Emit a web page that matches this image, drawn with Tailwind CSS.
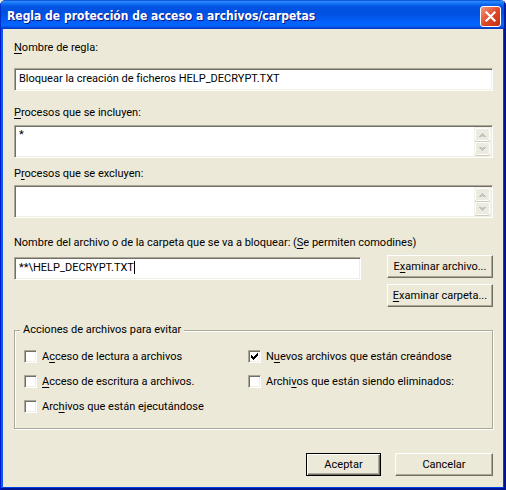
<!DOCTYPE html>
<html lang="es">
<head>
  <meta charset="UTF-8" />
  <meta name="viewport" content="width=device-width, initial-scale=1" />
  <title>Regla de protección de acceso a archivos/carpetas</title>
  <script src="https://cdn.jsdelivr.net/npm/@tailwindcss/browser@4"></script>
</head>
<body class="bg-[#ece9d8] text-black text-[11px] leading-[14px] font-['Roboto','Liberation_Sans',sans-serif] [font-variant-ligatures:none]">

  <div class="min-h-screen flex flex-col rounded-t-md overflow-hidden bg-[#ece9d8] shadow-[inset_1px_0_#0019cf,inset_-2px_-2px_#001590,inset_3px_0_#0c5be8,inset_-3px_-3px_#003ee6]">

    <header class="h-[29px] flex items-center justify-between pl-[7px] pr-[5px] pt-[3px] bg-[linear-gradient(to_bottom,#0048d0_0%,#2f8cff_6%,#1272f5_12%,#0455e2_22%,#0050e0_45%,#0560fb_75%,#0365fe_88%,#0048dc_95%,#0036b8_100%)] shadow-[inset_1px_0_#0030c8,inset_-2px_0_#001ea0]">
      <h1 class="text-[12px] leading-4 font-bold text-white whitespace-nowrap [text-shadow:1px_1px_#0a1883] font-['DejaVu_Sans_Condensed','DejaVu_Sans',sans-serif]">Regla de protección de acceso a archivos/carpetas</h1>
      <button type="button" aria-label="Cerrar" class="size-[21px] shrink-0 grid place-items-center rounded-[3px] border border-white bg-linear-to-br from-[#f0957c] via-[#e0492a] to-[#c03010]">
        <svg class="size-[13px]" viewBox="0 0 13 13" fill="none" stroke="white" stroke-width="2.2" stroke-linecap="square">
          <path d="M2.5 2.5 10.5 10.5M10.5 2.5 2.5 10.5" />
        </svg>
      </button>
    </header>

    <form class="flex flex-col pl-[14px] pr-[13px] pt-3 pb-[13px]">
      <label for="rule-name"><u class="underline-offset-2">N</u>ombre de regla:</label>
      <input id="rule-name" type="text" value="Bloquear la creación de ficheros HELP_DECRYPT.TXT"
        class="mt-[13px] h-[23px] px-1 pb-0.5 bg-white outline-none border border-t-[#aca899] border-l-[#aca899] border-r-white border-b-white shadow-[inset_1px_1px_#716f64,inset_-1px_-1px_#f1efe2]" />

      <label for="include" class="mt-[15px]"><u class="underline-offset-2">P</u>rocesos que se incluyen:</label>
      <div class="mt-[5px] h-[33px] flex p-px bg-white border border-t-[#aca899] border-l-[#aca899] border-r-white border-b-white shadow-[inset_1px_1px_#716f64,inset_-1px_-1px_#f1efe2]">
        <textarea id="include" class="flex-1 min-w-0 px-[3px] pt-px resize-none overflow-hidden outline-none">*</textarea>
        <div class="w-[17px] flex flex-col gap-px p-px bg-[#f3f1ea]">
          <button type="button" disabled aria-label="Subir" class="flex-1 grid place-items-center rounded-xs border border-white bg-[#ecebe2] shadow-[0_1px_#cfcdb8]">
            <svg class="w-[7px] h-1" viewBox="0 0 7 4" fill="#c4c3b8"><path d="M3 0h1v1h1v1h1v1h1v1H4V3H3v1H0V3h1V2h1V1h1z" /></svg>
          </button>
          <button type="button" disabled aria-label="Bajar" class="flex-1 grid place-items-center rounded-xs border border-white bg-[#ecebe2] shadow-[0_1px_#cfcdb8]">
            <svg class="w-[7px] h-1" viewBox="0 0 7 4" fill="#c4c3b8"><path d="M3 4h1V3h1V2h1V1h1V0H4v1H3V0H0v1h1v1h1v1h1z" /></svg>
          </button>
        </div>
      </div>

      <label for="exclude" class="mt-[9px]">P<u class="underline-offset-2">r</u>ocesos que se excluyen:</label>
      <div class="mt-1 h-[33px] flex p-px bg-white border border-t-[#aca899] border-l-[#aca899] border-r-white border-b-white shadow-[inset_1px_1px_#716f64,inset_-1px_-1px_#f1efe2]">
        <textarea id="exclude" class="flex-1 min-w-0 px-[3px] pt-px resize-none overflow-hidden outline-none"></textarea>
        <div class="w-[17px] flex flex-col gap-px p-px bg-[#f3f1ea]">
          <button type="button" disabled aria-label="Subir" class="flex-1 grid place-items-center rounded-xs border border-white bg-[#ecebe2] shadow-[0_1px_#cfcdb8]">
            <svg class="w-[7px] h-1" viewBox="0 0 7 4" fill="#c4c3b8"><path d="M3 0h1v1h1v1h1v1h1v1H4V3H3v1H0V3h1V2h1V1h1z" /></svg>
          </button>
          <button type="button" disabled aria-label="Bajar" class="flex-1 grid place-items-center rounded-xs border border-white bg-[#ecebe2] shadow-[0_1px_#cfcdb8]">
            <svg class="w-[7px] h-1" viewBox="0 0 7 4" fill="#c4c3b8"><path d="M3 4h1V3h1V2h1V1h1V0H4v1H3V0H0v1h1v1h1v1h1z" /></svg>
          </button>
        </div>
      </div>

      <label for="target" class="mt-[18px]">Nombre del archivo o de la carpeta que se va a bloquear: (<u class="underline-offset-2">S</u>e permiten comodines)</label>
      <div class="mt-[5px] flex items-start gap-[26px]">
        <div class="mt-0.5 h-[23px] flex-1 min-w-0 flex items-start px-1 pt-[3px] bg-white border border-t-[#aca899] border-l-[#aca899] border-r-white border-b-white shadow-[inset_1px_1px_#716f64,inset_-1px_-1px_#f1efe2]">
          <input id="target" type="text" value="**\HELP_DECRYPT.TXT" class="[field-sizing:content] outline-none" />
          <!-- caret -->
          <span class="w-px h-[13px] bg-black"></span>
        </div>
        <div class="w-[106px] flex flex-col gap-1.5">
          <button type="button" class="h-[23px] whitespace-nowrap border border-t-white border-l-white border-r-[#716f64] border-b-[#716f64] shadow-[inset_-1px_-1px_#aca899]">E<u class="underline-offset-2">x</u>aminar archivo...</button>
          <button type="button" class="h-[23px] whitespace-nowrap border border-t-white border-l-white border-r-[#716f64] border-b-[#716f64] shadow-[inset_-1px_-1px_#aca899]"><u class="underline-offset-2">E</u>xaminar carpeta...</button>
        </div>
      </div>

      <fieldset class="mt-4 px-[9px] pt-3 pb-[14px] border border-[#aca899] shadow-[1px_1px_white,inset_1px_1px_white]">
        <legend class="-ml-1 px-[3px] bg-[#ece9d8]">Acciones de archivos para evitar</legend>
        <div class="grid grid-cols-[224px_1fr] gap-y-2.5">
          <label class="flex items-center gap-[5px]">
            <input type="checkbox" class="size-[13px] appearance-none bg-white border border-t-[#aca899] border-l-[#aca899] border-r-white border-b-white shadow-[inset_1px_1px_#716f64,inset_-1px_-1px_#f1efe2]" />
            <span class="pt-px">A<u class="underline-offset-2">c</u>ceso de lectura a archivos</span>
          </label>
          <label class="flex items-center gap-[5px]">
            <span class="grid place-items-center">
              <input type="checkbox" checked class="peer col-start-1 row-start-1 size-[13px] appearance-none bg-white border border-t-[#aca899] border-l-[#aca899] border-r-white border-b-white shadow-[inset_1px_1px_#716f64,inset_-1px_-1px_#f1efe2]" />
              <svg class="col-start-1 row-start-1 size-[7px] pointer-events-none invisible peer-checked:visible" viewBox="0 0 7 7"><path d="M0 2v3h1v1h1v1h1V6h1V5h1V4h1V3h1V0H6v1H5v1H4v1H3v1H2V3H1V2z" /></svg>
            </span>
            <span class="pt-px">N<u class="underline-offset-2">u</u>evos archivos que están creándose</span>
          </label>
          <label class="flex items-center gap-[5px]">
            <input type="checkbox" class="size-[13px] appearance-none bg-white border border-t-[#aca899] border-l-[#aca899] border-r-white border-b-white shadow-[inset_1px_1px_#716f64,inset_-1px_-1px_#f1efe2]" />
            <span class="pt-px"><u class="underline-offset-2">A</u>cceso de escritura a archivos.</span>
          </label>
          <label class="flex items-center gap-[5px]">
            <input type="checkbox" class="size-[13px] appearance-none bg-white border border-t-[#aca899] border-l-[#aca899] border-r-white border-b-white shadow-[inset_1px_1px_#716f64,inset_-1px_-1px_#f1efe2]" />
            <span class="pt-px">Archi<u class="underline-offset-2">v</u>os que están siendo eliminados:</span>
          </label>
          <label class="flex items-center gap-[5px]">
            <input type="checkbox" class="size-[13px] appearance-none bg-white border border-t-[#aca899] border-l-[#aca899] border-r-white border-b-white shadow-[inset_1px_1px_#716f64,inset_-1px_-1px_#f1efe2]" />
            <span class="pt-px">Arc<u class="underline-offset-2">h</u>ivos que están ejecutándose</span>
          </label>
        </div>
      </fieldset>

      <div class="mt-6 flex justify-end gap-[14px]">
        <button type="submit" class="w-[75px] h-[23px] border border-black shadow-[inset_1px_1px_white,inset_-1px_-1px_#716f64,inset_-2px_-2px_#aca899]">Aceptar</button>
        <button type="button" class="w-[98px] h-[23px] border border-t-white border-l-white border-r-[#716f64] border-b-[#716f64] shadow-[inset_-1px_-1px_#aca899]">Cancelar</button>
      </div>
    </form>
  </div>

</body>
</html>
